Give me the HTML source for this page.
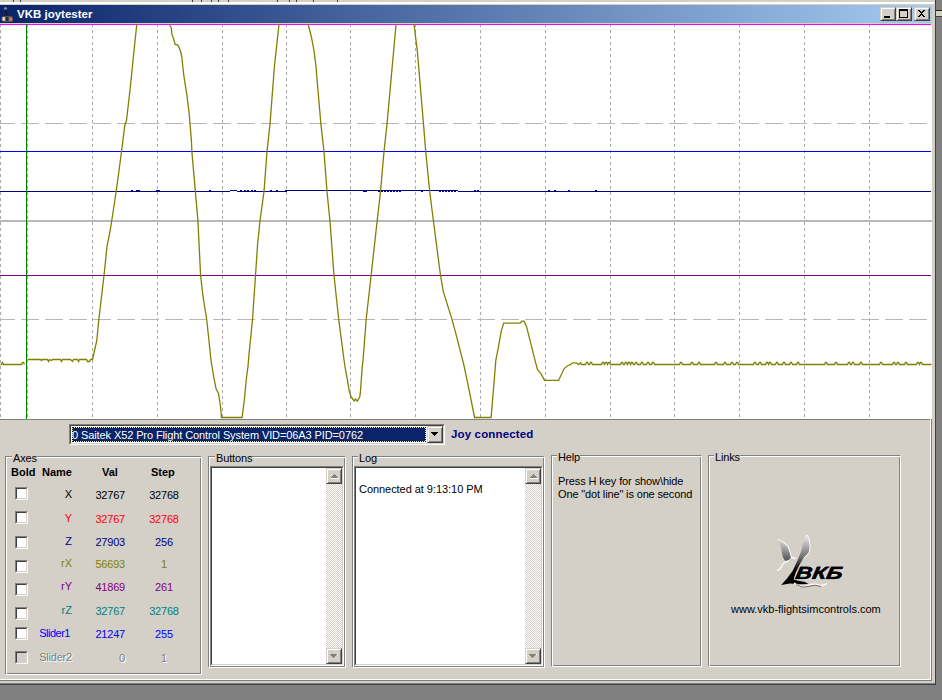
<!DOCTYPE html>
<html><head><meta charset="utf-8">
<style>
*{margin:0;padding:0;box-sizing:border-box}
html,body{width:942px;height:700px;overflow:hidden;background:#808080;font-family:"Liberation Sans",sans-serif;font-size:11px;color:#000}
.a{position:absolute}
.t{white-space:nowrap;line-height:13px}
.b{font-weight:bold}
.btn{background:#d4d0c8;border-top:1px solid #d4d0c8;border-left:1px solid #d4d0c8;border-right:1px solid #404040;border-bottom:1px solid #404040;box-shadow:inset 1px 1px 0 #fff,inset -1px -1px 0 #808080}
.chk{background-color:#fff;background-image:linear-gradient(45deg,#d4d0c8 25%,transparent 25%,transparent 75%,#d4d0c8 75%),linear-gradient(45deg,#d4d0c8 25%,transparent 25%,transparent 75%,#d4d0c8 75%);background-size:2px 2px;background-position:0 0,1px 1px}
</style></head><body>
<div class="a" style="left:0;top:0;width:936px;height:685px;background:#d4d0c8"></div>
<div class="a" style="left:0;top:2px;width:934px;height:2px;background:#fff"></div>
<div class="a" style="left:13px;top:0;width:1px;height:2px;background:#404040"></div><div class="a" style="left:20px;top:0;width:1px;height:2px;background:#404040"></div><div class="a" style="left:192px;top:0;width:1px;height:2px;background:#404040"></div><div class="a" style="left:201px;top:0;width:1px;height:2px;background:#404040"></div><div class="a" style="left:211px;top:0;width:1px;height:2px;background:#404040"></div><div class="a" style="left:218px;top:0;width:1px;height:2px;background:#404040"></div><div class="a" style="left:228px;top:0;width:1px;height:2px;background:#404040"></div><div class="a" style="left:277px;top:0;width:1px;height:2px;background:#404040"></div><div class="a" style="left:289px;top:0;width:1px;height:2px;background:#404040"></div><div class="a" style="left:296px;top:0;width:1px;height:2px;background:#404040"></div><div class="a" style="left:313px;top:0;width:1px;height:2px;background:#404040"></div><div class="a" style="left:337px;top:0;width:1px;height:2px;background:#404040"></div>
<div class="a" style="left:935px;top:0;width:1px;height:685px;background:#404040"></div>
<div class="a" style="left:0;top:683px;width:935px;height:1px;background:#808080"></div>
<div class="a" style="left:0;top:684px;width:936px;height:1px;background:#404040"></div>
<div class="a" style="left:936px;top:10px;width:6px;height:7px;background:#d4d0c8;border-top:1px solid #202020;border-bottom:1px solid #404040"></div>
<div class="a" style="left:0;top:5px;width:932px;height:18px;background:linear-gradient(to right,#0a246a,#a6caf0)"></div>
<div class="a t b" style="left:17px;top:8px;color:#fff;font-size:11.5px">VKB joytester</div>
<svg class="a" style="left:0;top:5px" width="16" height="18">
<circle cx="5.5" cy="3.6" r="1.5" fill="#9090a8"/>
<path d="M5.5 4.5 L7 12" stroke="#1a1a22" stroke-width="1.5"/>
<rect x="1.5" y="11.2" width="11.5" height="5.5" rx="2" fill="#606068"/>
<rect x="2.5" y="12.2" width="3" height="3.5" fill="#d8d8d8"/>
<rect x="5.5" y="12.2" width="3" height="3.5" fill="#302020"/>
<rect x="9" y="12.5" width="3" height="3.5" fill="#d87050"/>
</svg>
<div class="a btn" style="left:880px;top:7px;width:16px;height:14px"></div>
<div class="a btn" style="left:896px;top:7px;width:16px;height:14px"></div>
<div class="a btn" style="left:914px;top:7px;width:16px;height:14px"></div>
<svg class="a" style="left:880px;top:7px" width="50" height="14" shape-rendering="crispEdges">
<path d="M4 9h6v2H4z" fill="#000"/>
<path d="M19 2h9v9h-9zM20 4v6h7V4z" fill="#000" fill-rule="evenodd"/>
<path d="M38 3h2v1h1v1h1V4h1V3h2v1h-1v1h-1v1h-1v1h1v1h1v1h1v1h-2V9h-1V8h-1v1h-1v1h-2V9h1V8h1V7h1V6h-1V5h-1V4h-1z" fill="#000"/>
</svg>
<div class="a" style="left:0;top:24px;width:932px;height:395px;background:#fff;overflow:hidden">
<div class="a" style="left:0;top:-24px;width:932px;height:420px"><svg class="a" style="left:0;top:0" width="932" height="420" shape-rendering="crispEdges">
<line x1="0.5" y1="24" x2="0.5" y2="419" stroke="#a8a8a8" stroke-width="1" stroke-dasharray="3 3"/>
<line x1="27.5" y1="24" x2="27.5" y2="419" stroke="#a8a8a8" stroke-width="1" stroke-dasharray="3 3"/>
<line x1="92.5" y1="24" x2="92.5" y2="419" stroke="#a8a8a8" stroke-width="1" stroke-dasharray="3 3"/>
<line x1="157.5" y1="24" x2="157.5" y2="419" stroke="#a8a8a8" stroke-width="1" stroke-dasharray="3 3"/>
<line x1="222.5" y1="24" x2="222.5" y2="419" stroke="#a8a8a8" stroke-width="1" stroke-dasharray="3 3"/>
<line x1="286.5" y1="24" x2="286.5" y2="419" stroke="#a8a8a8" stroke-width="1" stroke-dasharray="3 3"/>
<line x1="350.5" y1="24" x2="350.5" y2="419" stroke="#a8a8a8" stroke-width="1" stroke-dasharray="3 3"/>
<line x1="415.5" y1="24" x2="415.5" y2="419" stroke="#a8a8a8" stroke-width="1" stroke-dasharray="3 3"/>
<line x1="480.5" y1="24" x2="480.5" y2="419" stroke="#a8a8a8" stroke-width="1" stroke-dasharray="3 3"/>
<line x1="545.5" y1="24" x2="545.5" y2="419" stroke="#a8a8a8" stroke-width="1" stroke-dasharray="3 3"/>
<line x1="610.5" y1="24" x2="610.5" y2="419" stroke="#a8a8a8" stroke-width="1" stroke-dasharray="3 3"/>
<line x1="674.5" y1="24" x2="674.5" y2="419" stroke="#a8a8a8" stroke-width="1" stroke-dasharray="3 3"/>
<line x1="739.5" y1="24" x2="739.5" y2="419" stroke="#a8a8a8" stroke-width="1" stroke-dasharray="3 3"/>
<line x1="804.5" y1="24" x2="804.5" y2="419" stroke="#a8a8a8" stroke-width="1" stroke-dasharray="3 3"/>
<line x1="869.5" y1="24" x2="869.5" y2="419" stroke="#a8a8a8" stroke-width="1" stroke-dasharray="3 3"/>
<line x1="-3" y1="123.5" x2="932" y2="123.5" stroke="#b8b8b8" stroke-width="1" stroke-dasharray="18 6"/>
<line x1="-3" y1="319.5" x2="932" y2="319.5" stroke="#b8b8b8" stroke-width="1" stroke-dasharray="18 6"/>
<rect x="0" y="220" width="932" height="2" fill="#b8b8b8"/>
<line x1="0" y1="151.5" x2="931" y2="151.5" stroke="#0000ff" stroke-width="1"/>
<line x1="0" y1="275.5" x2="931" y2="275.5" stroke="#800080" stroke-width="1"/>
<path d="M0 191h230v1h-230zM230 190h7v1h-7zM237 191h50v1h-50zM287 190h171v1h-171zM458 191h473v1h-473zM131 190h2v1h-2zM136 190h2v1h-2zM138 190h2v1h-2zM156 190h2v1h-2zM158 190h2v1h-2zM209 190h2v1h-2zM240 190h2v1h-2zM244 190h2v1h-2zM247 190h2v1h-2zM251 190h2v1h-2zM254 190h2v1h-2zM270 190h2v1h-2zM276 190h2v1h-2zM285 190h2v1h-2zM474 190h2v1h-2zM477 190h2v1h-2zM548 190h2v1h-2zM554 190h2v1h-2zM568 190h2v1h-2zM595 190h2v1h-2zM363 191h2v1h-2zM365 191h2v1h-2zM378 191h2v1h-2zM381 191h2v1h-2zM384 191h2v1h-2zM387 191h2v1h-2zM390 191h2v1h-2zM393 191h2v1h-2zM396 191h2v1h-2zM399 191h2v1h-2zM421 191h2v1h-2zM439 191h2v1h-2zM442 191h2v1h-2zM445 191h2v1h-2zM448 191h2v1h-2zM451 191h2v1h-2zM454 191h2v1h-2z" fill="#000080"/>
<line x1="0" y1="24.5" x2="931" y2="24.5" stroke="#ff00ff" stroke-width="1"/>
<polyline points="0.0,364.0 1.0,364.0 2.0,362.0 3.0,364.0 21.0,364.0 22.0,362.0 23.0,362.0 24.0,364.0" fill="none" stroke="#808000" stroke-width="1.3" transform="translate(0.5,0.5)" shape-rendering="auto"/>
<polyline points="27.0,359.0 40.0,359.0 41.0,360.0 42.0,359.0 47.0,359.0 48.0,361.0 49.0,359.0 51.0,360.0 52.0,359.0 60.0,359.0 61.0,361.0 62.0,359.0 70.0,359.0 71.0,360.0 72.0,361.0 73.0,359.0 77.0,359.0 78.0,361.0 79.0,359.0 86.0,359.0 87.0,361.0 89.0,361.0 90.0,359.0 92.0,359.0 94.0,350.0 96.3,340.0 98.2,320.0 103.4,276.0 106.5,246.0 109.7,230.0 115.7,191.0 120.9,152.0 124.3,125.0 126.0,120.0 130.0,85.0 133.0,55.0 136.5,22.0 169.0,22.0 169.3,25.0 170.7,27.0 171.4,33.6 173.2,38.6 174.6,43.9 177.1,44.3 178.6,47.1 180.4,52.0 181.4,57.0 182.7,70.0 183.6,77.0 186.4,94.3 188.7,113.7 190.9,140.0 191.4,151.4 194.9,191.4 197.4,220.0 200.1,275.0 202.4,295.0 206.2,319.0 209.5,350.0 210.5,360.0 213.0,375.0 215.5,388.0 218.0,393.0 220.0,406.0 221.0,417.0 241.5,417.0 242.5,410.0 244.0,398.0 245.0,387.0 246.0,377.0 247.5,366.0 248.4,355.0 252.0,319.0 255.0,275.0 257.0,245.0 259.4,221.0 263.5,191.0 266.5,151.0 269.5,123.6 274.0,65.0 278.7,22.0 307.2,22.0 309.0,29.0 311.0,37.0 313.5,50.0 315.5,66.0 317.4,89.0 320.4,123.6 323.5,151.0 326.5,191.0 329.5,221.0 333.5,275.0 338.2,318.6 343.6,360.0 344.6,367.0 345.7,372.9 346.8,378.6 347.9,385.7 348.9,391.4 349.6,393.2 350.4,396.0 353.6,400.4 355.0,398.6 356.8,400.7 359.3,396.4 360.0,390.7 360.7,380.7 361.6,367.9 362.5,360.0 365.7,318.6 370.6,275.0 376.6,221.0 380.0,191.0 383.5,151.0 386.5,123.6 395.7,22.0 413.3,22.0 416.9,51.4 423.0,123.6 425.2,151.0 429.2,191.0 433.0,221.0 440.0,275.0 442.9,291.4 451.4,318.6 455.7,334.3 460.0,351.4 463.1,363.4 467.1,382.2 474.1,417.0 490.6,417.0 492.2,398.0 493.8,379.0 495.3,360.0 497.7,347.7 500.8,330.4 503.2,322.6 519.7,322.6 521.2,320.7 523.6,320.7 525.9,325.7 529.9,341.4 533.8,357.1 536.9,368.9 540.8,373.6 544.0,379.9 558.1,379.9 563.6,368.1 567.5,365.0 569.9,364.2 572.2,362.3 576.2,362.3 577.7,364.2 580.0,362.3 581.0,364.0 585.0,364.0 586.0,362.0 587.0,362.0 588.0,364.0 589.0,364.0 590.0,362.0 591.0,362.0 592.0,364.0 601.0,364.0 602.0,362.0 603.0,362.0 604.0,364.0 604.0,364.0 605.0,362.0 606.0,362.0 607.0,364.0 607.0,364.0 608.0,362.0 609.0,362.0 610.0,364.0 620.0,364.0 621.0,362.0 622.0,362.0 623.0,364.0 624.0,364.0 625.0,362.0 626.0,362.0 627.0,364.0 627.0,364.0 628.0,362.0 629.0,362.0 630.0,364.0 630.0,364.0 631.0,362.0 632.0,362.0 633.0,364.0 634.0,364.0 635.0,362.0 636.0,362.0 637.0,364.0 640.0,364.0 641.0,362.0 642.0,362.0 643.0,364.0 646.0,364.0 647.0,362.0 648.0,362.0 649.0,364.0 651.0,364.0 652.0,362.0 653.0,362.0 654.0,364.0 679.0,364.0 680.0,362.0 681.0,362.0 682.0,364.0 690.0,364.0 691.0,362.0 692.0,362.0 693.0,364.0 697.0,364.0 698.0,362.0 699.0,362.0 700.0,364.0 714.0,364.0 715.0,362.0 716.0,362.0 717.0,364.0 723.0,364.0 724.0,362.0 725.0,362.0 726.0,364.0 730.0,364.0 731.0,362.0 732.0,362.0 733.0,364.0 735.0,364.0 736.0,362.0 737.0,362.0 738.0,364.0 753.0,364.0 754.0,362.0 755.0,362.0 756.0,364.0 758.0,364.0 759.0,362.0 760.0,362.0 761.0,364.0 765.0,364.0 766.0,362.0 767.0,362.0 768.0,364.0 768.0,364.0 769.0,362.0 770.0,362.0 771.0,364.0 775.0,364.0 776.0,362.0 777.0,362.0 778.0,364.0 782.0,364.0 783.0,362.0 784.0,362.0 785.0,364.0 789.0,364.0 790.0,362.0 791.0,362.0 792.0,364.0 796.0,364.0 797.0,362.0 798.0,362.0 799.0,364.0 824.0,364.0 825.0,362.0 826.0,362.0 827.0,364.0 834.0,364.0 835.0,362.0 836.0,362.0 837.0,364.0 847.0,364.0 848.0,362.0 849.0,362.0 850.0,364.0 851.0,364.0 852.0,362.0 853.0,362.0 854.0,364.0 859.0,364.0 860.0,362.0 861.0,362.0 862.0,364.0 879.0,364.0 880.0,362.0 881.0,362.0 882.0,364.0 892.0,364.0 893.0,362.0 894.0,362.0 895.0,364.0 896.0,364.0 897.0,362.0 898.0,362.0 899.0,364.0 904.0,364.0 905.0,362.0 906.0,362.0 907.0,364.0 916.0,364.0 917.0,362.0 918.0,362.0 919.0,364.0 919.0,364.0 920.0,362.0 921.0,362.0 922.0,364.0 931.0,364.0" fill="none" stroke="#808000" stroke-width="1.3" transform="translate(0.5,0.5)" shape-rendering="auto"/>
<line x1="26.5" y1="24" x2="26.5" y2="419" stroke="#008000" stroke-width="1"/>
</svg></div>
</div>
<div class="a" style="left:0;top:419px;width:931px;height:1px;background:#808080"></div>
<div class="a" style="left:930px;top:419px;width:1px;height:261px;background:#fff"></div>
<div class="a" style="left:931px;top:419px;width:1px;height:262px;background:#808080"></div>
<div class="a" style="left:0;top:679px;width:931px;height:1px;background:#fff"></div>
<div class="a" style="left:0;top:680px;width:932px;height:1px;background:#808080"></div>

<!-- combo -->
<div class="a" style="left:69px;top:424px;width:376px;height:21px;background:#fff;border-top:1px solid #808080;border-left:1px solid #808080;border-right:1px solid #fff;border-bottom:1px solid #fff"></div>
<div class="a" style="left:70px;top:425px;width:374px;height:19px;border-top:1px solid #404040;border-left:1px solid #404040;border-right:1px solid #d4d0c8;border-bottom:1px solid #d4d0c8"></div>
<div class="a" style="left:72px;top:427px;width:354px;height:15px;background:#0a246a;border:1px solid #f0f0b0"></div><div class="a" style="left:72px;top:427px;width:354px;height:15px;border:1px dotted #000"></div>
<div class="a t" style="left:72px;top:429px;color:#fff;letter-spacing:-0.1px">0 Saitek X52 Pro Flight Control System VID=06A3 PID=0762</div>
<div class="a btn" style="left:427px;top:426px;width:16px;height:17px"></div>
<svg class="a" style="left:427px;top:426px" width="16" height="17" shape-rendering="crispEdges"><path d="M4 6h7v1h-1v1h-1v1h-1v1H7V9H6V8H5V7H4z" fill="#000"/></svg>
<div class="a t b" style="left:451px;top:428px;color:#000080;font-size:11.5px;letter-spacing:0.15px">Joy connected</div>

<div class="a" style="left:5px;top:456px;width:196px;height:218px;border:1px solid #808080"></div><div class="a" style="left:6px;top:457px;width:196px;height:218px;border:1px solid #fff"></div><div class="a t" style="left:12px;top:452px;padding:0 0 0 1px;letter-spacing:-0.15px;background:#d4d0c8">Axes</div>
<div class="a t b" style="left:11px;top:466px">Bold</div>
<div class="a t b" style="left:42px;top:466px">Name</div>
<div class="a t b" style="left:102px;top:466px">Val</div>
<div class="a t b" style="left:151px;top:466px">Step</div>
<div class="a" style="left:15px;top:487px;width:13px;height:13px;background:#fff;border-top:1px solid #808080;border-left:1px solid #808080;border-right:1px solid #fff;border-bottom:1px solid #fff"></div><div class="a" style="left:16px;top:488px;width:11px;height:11px;border-top:1px solid #404040;border-left:1px solid #404040;border-right:1px solid #d4d0c8;border-bottom:1px solid #d4d0c8"></div><div class="a t" style="right:870px;top:488px;color:#000;">X</div><div class="a t" style="right:817px;top:489px;color:#000;letter-spacing:-0.2px;">32767</div><div class="a t" style="left:134px;width:60px;text-align:center;top:489px;color:#000;letter-spacing:-0.2px;">32768</div><div class="a" style="left:15px;top:511px;width:13px;height:13px;background:#fff;border-top:1px solid #808080;border-left:1px solid #808080;border-right:1px solid #fff;border-bottom:1px solid #fff"></div><div class="a" style="left:16px;top:512px;width:11px;height:11px;border-top:1px solid #404040;border-left:1px solid #404040;border-right:1px solid #d4d0c8;border-bottom:1px solid #d4d0c8"></div><div class="a t" style="right:870px;top:512px;color:#ff0000;">Y</div><div class="a t" style="right:817px;top:513px;color:#ff0000;letter-spacing:-0.2px;">32767</div><div class="a t" style="left:134px;width:60px;text-align:center;top:513px;color:#ff0000;letter-spacing:-0.2px;">32768</div><div class="a" style="left:15px;top:536px;width:13px;height:13px;background:#fff;border-top:1px solid #808080;border-left:1px solid #808080;border-right:1px solid #fff;border-bottom:1px solid #fff"></div><div class="a" style="left:16px;top:537px;width:11px;height:11px;border-top:1px solid #404040;border-left:1px solid #404040;border-right:1px solid #d4d0c8;border-bottom:1px solid #d4d0c8"></div><div class="a t" style="right:870px;top:535px;color:#000080;">Z</div><div class="a t" style="right:817px;top:536px;color:#000080;letter-spacing:-0.2px;">27903</div><div class="a t" style="left:134px;width:60px;text-align:center;top:536px;color:#000080;letter-spacing:-0.2px;">256</div><div class="a" style="left:15px;top:560px;width:13px;height:13px;background:#fff;border-top:1px solid #808080;border-left:1px solid #808080;border-right:1px solid #fff;border-bottom:1px solid #fff"></div><div class="a" style="left:16px;top:561px;width:11px;height:11px;border-top:1px solid #404040;border-left:1px solid #404040;border-right:1px solid #d4d0c8;border-bottom:1px solid #d4d0c8"></div><div class="a t" style="right:870px;top:557px;color:#808000;">rX</div><div class="a t" style="right:817px;top:558px;color:#808000;letter-spacing:-0.2px;">56693</div><div class="a t" style="left:134px;width:60px;text-align:center;top:558px;color:#808000;letter-spacing:-0.2px;">1</div><div class="a" style="left:15px;top:583px;width:13px;height:13px;background:#fff;border-top:1px solid #808080;border-left:1px solid #808080;border-right:1px solid #fff;border-bottom:1px solid #fff"></div><div class="a" style="left:16px;top:584px;width:11px;height:11px;border-top:1px solid #404040;border-left:1px solid #404040;border-right:1px solid #d4d0c8;border-bottom:1px solid #d4d0c8"></div><div class="a t" style="right:870px;top:580px;color:#800080;">rY</div><div class="a t" style="right:817px;top:581px;color:#800080;letter-spacing:-0.2px;">41869</div><div class="a t" style="left:134px;width:60px;text-align:center;top:581px;color:#800080;letter-spacing:-0.2px;">261</div><div class="a" style="left:15px;top:607px;width:13px;height:13px;background:#fff;border-top:1px solid #808080;border-left:1px solid #808080;border-right:1px solid #fff;border-bottom:1px solid #fff"></div><div class="a" style="left:16px;top:608px;width:11px;height:11px;border-top:1px solid #404040;border-left:1px solid #404040;border-right:1px solid #d4d0c8;border-bottom:1px solid #d4d0c8"></div><div class="a t" style="right:870px;top:604px;color:#008080;">rZ</div><div class="a t" style="right:817px;top:605px;color:#008080;letter-spacing:-0.2px;">32767</div><div class="a t" style="left:134px;width:60px;text-align:center;top:605px;color:#008080;letter-spacing:-0.2px;">32768</div><div class="a" style="left:15px;top:627px;width:13px;height:13px;background:#fff;border-top:1px solid #808080;border-left:1px solid #808080;border-right:1px solid #fff;border-bottom:1px solid #fff"></div><div class="a" style="left:16px;top:628px;width:11px;height:11px;border-top:1px solid #404040;border-left:1px solid #404040;border-right:1px solid #d4d0c8;border-bottom:1px solid #d4d0c8"></div><div class="a t" style="right:872px;top:627px;color:#0000ff;letter-spacing:-0.5px;">Slider1</div><div class="a t" style="right:817px;top:628px;color:#0000ff;letter-spacing:-0.2px;">21247</div><div class="a t" style="left:134px;width:60px;text-align:center;top:628px;color:#0000ff;letter-spacing:-0.2px;">255</div><div class="a" style="left:15px;top:651px;width:13px;height:13px;background:#d4d0c8;border-top:1px solid #808080;border-left:1px solid #808080;border-right:1px solid #fff;border-bottom:1px solid #fff"></div><div class="a" style="left:16px;top:652px;width:11px;height:11px;border-top:1px solid #404040;border-left:1px solid #404040;border-right:1px solid #d4d0c8;border-bottom:1px solid #d4d0c8"></div><div class="a t" style="right:870px;top:651px;color:#808080;text-shadow:1px 1px 0 #fff;letter-spacing:-0.2px;">Slider2</div><div class="a t" style="right:817px;top:652px;color:#808080;letter-spacing:-0.2px;text-shadow:1px 1px 0 #fff;">0</div><div class="a t" style="left:134px;width:60px;text-align:center;top:652px;color:#808080;letter-spacing:-0.2px;text-shadow:1px 1px 0 #fff;">1</div>

<div class="a" style="left:208px;top:456px;width:137px;height:211px;border:1px solid #808080"></div><div class="a" style="left:209px;top:457px;width:137px;height:211px;border:1px solid #fff"></div><div class="a t" style="left:215px;top:452px;padding:0 0 0 1px;letter-spacing:-0.15px;background:#d4d0c8">Buttons</div>
<div class="a" style="left:210px;top:466px;width:134px;height:200px;background:#fff;border-top:1px solid #808080;border-left:1px solid #808080;border-right:1px solid #fff;border-bottom:1px solid #fff"></div><div class="a" style="left:211px;top:467px;width:132px;height:198px;border-top:1px solid #404040;border-left:1px solid #404040;border-right:1px solid #d4d0c8;border-bottom:1px solid #d4d0c8"></div><div class="a chk" style="left:326px;top:468px;width:16px;height:196px"></div><div class="a btn" style="left:326px;top:468px;width:16px;height:16px"></div><svg class="a" style="left:326px;top:468px" width="16" height="16" shape-rendering="crispEdges"><path d="M8 6h1v1h1v1h1v1h1v1H5V9h1V8h1V7h1z" fill="#808080"/><path d="M5 10h8v1H5z" fill="#fff"/></svg><div class="a btn" style="left:326px;top:648px;width:16px;height:16px"></div><svg class="a" style="left:326px;top:648px" width="16" height="16" shape-rendering="crispEdges"><path d="M4 6h7v1h-1v1h-1v1h-1v1H7V9H6V8H5V7H4z" fill="#808080"/><path d="M11 6h1v1h-1v1h-1v1h-1v1h-1v1H8v-1h1V9h1V8h1z" fill="#fff"/></svg>
<div class="a" style="left:352px;top:456px;width:192px;height:211px;border:1px solid #808080"></div><div class="a" style="left:353px;top:457px;width:192px;height:211px;border:1px solid #fff"></div><div class="a t" style="left:358px;top:452px;padding:0 0 0 1px;letter-spacing:-0.15px;background:#d4d0c8">Log</div>
<div class="a" style="left:354px;top:466px;width:189px;height:200px;background:#fff;border-top:1px solid #808080;border-left:1px solid #808080;border-right:1px solid #fff;border-bottom:1px solid #fff"></div><div class="a" style="left:355px;top:467px;width:187px;height:198px;border-top:1px solid #404040;border-left:1px solid #404040;border-right:1px solid #d4d0c8;border-bottom:1px solid #d4d0c8"></div><div class="a chk" style="left:525px;top:468px;width:16px;height:196px"></div><div class="a btn" style="left:525px;top:468px;width:16px;height:16px"></div><svg class="a" style="left:525px;top:468px" width="16" height="16" shape-rendering="crispEdges"><path d="M8 6h1v1h1v1h1v1h1v1H5V9h1V8h1V7h1z" fill="#808080"/><path d="M5 10h8v1H5z" fill="#fff"/></svg><div class="a btn" style="left:525px;top:648px;width:16px;height:16px"></div><svg class="a" style="left:525px;top:648px" width="16" height="16" shape-rendering="crispEdges"><path d="M4 6h7v1h-1v1h-1v1h-1v1H7V9H6V8H5V7H4z" fill="#808080"/><path d="M11 6h1v1h-1v1h-1v1h-1v1h-1v1H8v-1h1V9h1V8h1z" fill="#fff"/></svg>
<div class="a t" style="left:359px;top:483px;letter-spacing:-0.05px">Connected at 9:13:10 PM</div>
<div class="a" style="left:551px;top:455px;width:150px;height:211px;border:1px solid #808080"></div><div class="a" style="left:552px;top:456px;width:150px;height:211px;border:1px solid #fff"></div><div class="a t" style="left:557px;top:451px;padding:0 0 0 1px;letter-spacing:-0.15px;background:#d4d0c8">Help</div>
<div class="a t" style="left:558px;top:475px;letter-spacing:-0.1px">Press H key for show\hide</div>
<div class="a t" style="left:558px;top:488px;letter-spacing:-0.14px">One "dot line" is one second</div>
<div class="a" style="left:708px;top:455px;width:192px;height:211px;border:1px solid #808080"></div><div class="a" style="left:709px;top:456px;width:192px;height:211px;border:1px solid #fff"></div><div class="a t" style="left:714px;top:451px;padding:0 0 0 1px;letter-spacing:-0.15px;background:#d4d0c8">Links</div>
<div class="a t" style="left:731px;top:603px">www.vkb-flightsimcontrols.com</div>
<svg class="a" style="left:770px;top:530px" width="80" height="62">
<defs>
<linearGradient id="gw" x1="0" y1="0" x2="0" y2="1"><stop offset="0" stop-color="#d8d8d8"/><stop offset="1" stop-color="#505050"/></linearGradient>
<linearGradient id="gs" x1="0" y1="0" x2="0" y2="1"><stop offset="0" stop-color="#f0f0f0"/><stop offset="0.45" stop-color="#707070"/><stop offset="0.7" stop-color="#000"/><stop offset="1" stop-color="#000"/></linearGradient>
<linearGradient id="gb" x1="0" y1="0" x2="1" y2="0"><stop offset="0" stop-color="#404040"/><stop offset="1" stop-color="#f4f4f4"/></linearGradient>
</defs>
<path d="M8 9.4 C11 10.5 14.9 12.9 17.9 16.3 L20 22.3 L21.3 27.4 L26 28.6" fill="none" stroke="#fff" stroke-width="1.1"/>
<path d="M8.6 10 C11 11 14.5 13.5 17.4 16.8 L19.6 22.5 L20.8 27.6 L18.5 30.3 L15 30.8 L12.8 27 L10.8 16.5 Z" fill="url(#gw)"/>
<path d="M19 30.8 C15 31.8 12.5 33.8 11.3 36.8 C10.6 38.8 9.2 40 6.8 40.4" fill="none" stroke="#fff" stroke-width="1.1"/>
<path d="M36.3 4.3 L38 7 L39.7 17 L38.8 22.3 L36.3 25 L33.7 27.4 L30 34 L26 42 L24 48 L27 50.5 L35 52 L38.5 54 L30 54.2 L20 53.6 L11.2 55 L17.4 48 L22.6 41 L27.7 30 L31.1 21.4 L34.6 7 Z" fill="url(#gs)"/>
<path d="M36.8 4.6 L38.6 7.2 L40.3 17 L39.3 22.6 L36.8 25.4 L34.2 27.8" fill="none" stroke="#fff" stroke-width="0.9"/>
<g transform="translate(0,48) skewX(-10) translate(0,-48)" font-family="Liberation Sans" font-weight="bold" font-style="italic" font-size="17.5"><text x="25" y="48.8" fill="none" stroke="#fff" stroke-width="1.6" textLength="47" lengthAdjust="spacingAndGlyphs">ВКБ</text><text x="25" y="48.8" fill="#000" stroke="#000" stroke-width="0.7" textLength="47" lengthAdjust="spacingAndGlyphs">ВКБ</text></g>
<path d="M55 50.8 H73" stroke="url(#gb)" stroke-width="1.6"/>
<path d="M24 53 Q30 58 38 55.5 Q44 53 50 55 Q53 56 57 53.5" fill="none" stroke="#fff" stroke-width="1.2"/>
<path d="M26 54.5 Q32 58.5 38 56.5 Q45 54 51 56.5" fill="none" stroke="#555" stroke-width="0.8"/>
</svg>
<div class="a" style="left:0;top:0"></div>
</body></html>
